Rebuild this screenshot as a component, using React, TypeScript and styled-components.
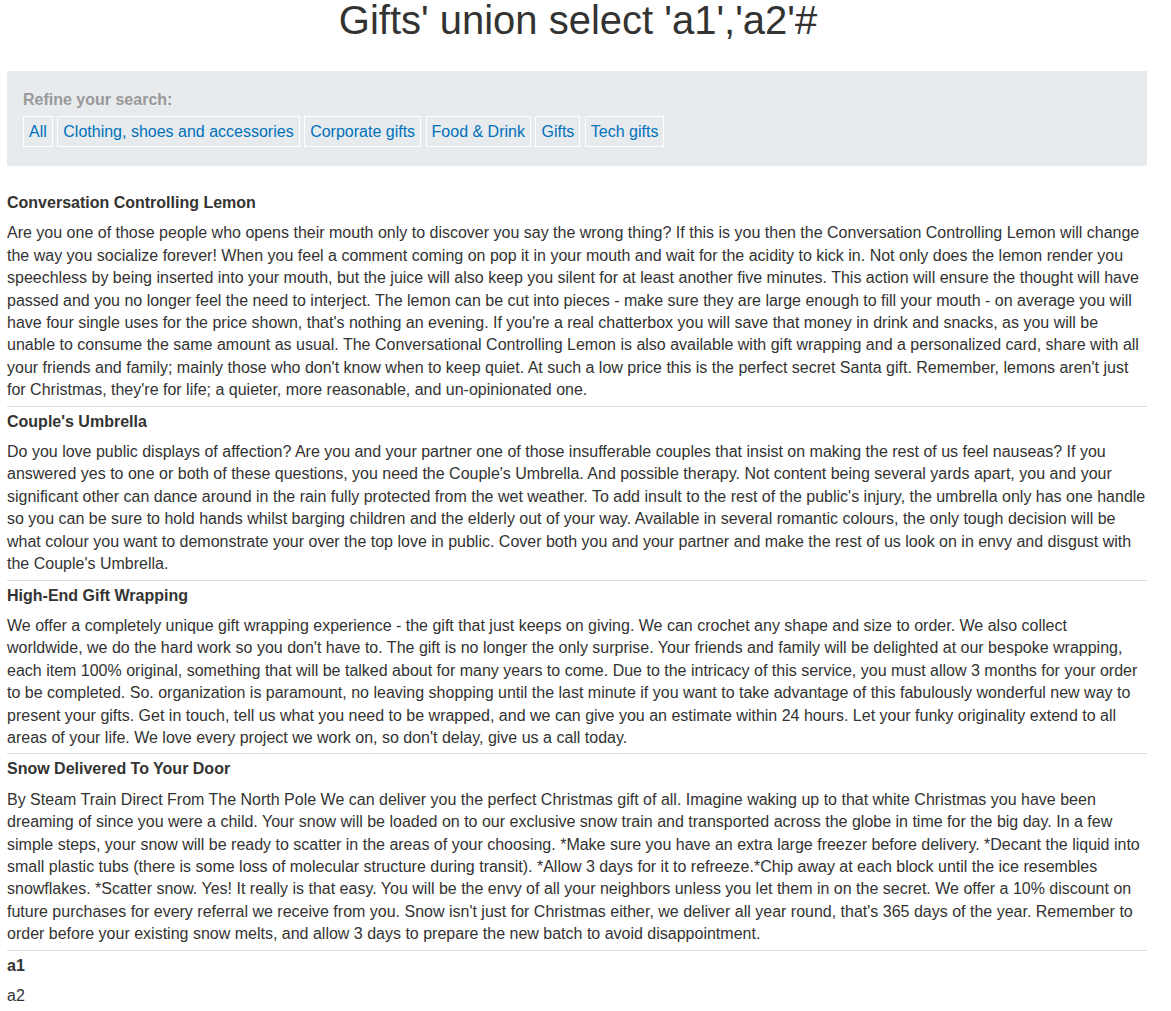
import styled, { createGlobalStyle } from 'styled-components';

const GlobalStyle = createGlobalStyle`
  body {
    margin: 0;
    background: #ffffff;
    color: #333332;
    font-family: "Liberation Sans", Arial, sans-serif;
    font-size: 16px;
  }
`;

const categories = [
  'All',
  'Clothing, shoes and accessories',
  'Corporate gifts',
  'Food & Drink',
  'Gifts',
  'Tech gifts',
];

const products = [
  {
    name: 'Conversation Controlling Lemon',
    text: "Are you one of those people who opens their mouth only to discover you say the wrong thing? If this is you then the Conversation Controlling Lemon will change the way you socialize forever! When you feel a comment coming on pop it in your mouth and wait for the acidity to kick in. Not only does the lemon render you speechless by being inserted into your mouth, but the juice will also keep you silent for at least another five minutes. This action will ensure the thought will have passed and you no longer feel the need to interject. The lemon can be cut into pieces - make sure they are large enough to fill your mouth - on average you will have four single uses for the price shown, that's nothing an evening. If you're a real chatterbox you will save that money in drink and snacks, as you will be unable to consume the same amount as usual. The Conversational Controlling Lemon is also available with gift wrapping and a personalized card, share with all your friends and family; mainly those who don't know when to keep quiet. At such a low price this is the perfect secret Santa gift. Remember, lemons aren't just for Christmas, they're for life; a quieter, more reasonable, and un-opinionated one.",
  },
  {
    name: "Couple's Umbrella",
    text: "Do you love public displays of affection? Are you and your partner one of those insufferable couples that insist on making the rest of us feel nauseas? If you answered yes to one or both of these questions, you need the Couple's Umbrella. And possible therapy. Not content being several yards apart, you and your significant other can dance around in the rain fully protected from the wet weather. To add insult to the rest of the public's injury, the umbrella only has one handle so you can be sure to hold hands whilst barging children and the elderly out of your way. Available in several romantic colours, the only tough decision will be what colour you want to demonstrate your over the top love in public. Cover both you and your partner and make the rest of us look on in envy and disgust with the Couple's Umbrella.",
  },
  {
    name: 'High-End Gift Wrapping',
    // the reference breaks before "worldwide"; our font runs a hair narrower
    text: "We offer a completely unique gift wrapping experience - the gift that just keeps on giving. We can crochet any shape and size to order. We also collect\nworldwide, we do the hard work so you don't have to. The gift is no longer the only surprise. Your friends and family will be delighted at our bespoke wrapping, each item 100% original, something that will be talked about for many years to come. Due to the intricacy of this service, you must allow 3 months for your order to be completed. So. organization is paramount, no leaving shopping until the last minute if you want to take advantage of this fabulously wonderful new way to present your gifts. Get in touch, tell us what you need to be wrapped, and we can give you an estimate within 24 hours. Let your funky originality extend to all areas of your life. We love every project we work on, so don't delay, give us a call today.",
  },
  {
    name: 'Snow Delivered To Your Door',
    text: "By Steam Train Direct From The North Pole We can deliver you the perfect Christmas gift of all. Imagine waking up to that white Christmas you have been dreaming of since you were a child. Your snow will be loaded on to our exclusive snow train and transported across the globe in time for the big day. In a few simple steps, your snow will be ready to scatter in the areas of your choosing. *Make sure you have an extra large freezer before delivery. *Decant the liquid into small plastic tubs (there is some loss of molecular structure during transit). *Allow 3 days for it to refreeze.*Chip away at each block until the ice resembles snowflakes. *Scatter snow. Yes! It really is that easy. You will be the envy of all your neighbors unless you let them in on the secret. We offer a 10% discount on future purchases for every referral we receive from you. Snow isn't just for Christmas either, we deliver all year round, that's 365 days of the year. Remember to order before your existing snow melts, and allow 3 days to prepare the new batch to avoid disappointment.",
  },
  { name: 'a1', text: 'a2' },
];

function App() {
  return (
    <>
      <GlobalStyle />
      <Page>
        <Title>Gifts' union select 'a1','a2'#</Title>
        <FilterPanel>
          <FilterLabel>Refine your search:</FilterLabel>
          <FilterList>
            {categories.map((c) => (
              <FilterLink key={c} href="#">{c}</FilterLink>
            ))}
          </FilterList>
        </FilterPanel>
        <ProductTable>
          {products.map((p, i) => (
            <ProductRow key={p.name} first={i === 0}>
              <ProductName>{p.name}</ProductName>
              <ProductText>{p.text}</ProductText>
            </ProductRow>
          ))}
        </ProductTable>
      </Page>
    </>
  );
}

const Page = styled.div`
  width: 1156px;
  display: flex;
  flex-direction: column;
  align-items: flex-start;
`;

const Title = styled.h1`
  width: 1156px;
  margin: 0;
  font-size: 40px;
  line-height: 40px;
  font-weight: normal;
  text-align: center;
  color: #333332;
`;

const FilterPanel = styled.div`
  width: 1140px;
  box-sizing: border-box;
  margin: 31px 0 0 7px;
  padding: 18px 16px 19px;
  background: #e7ebed;
  display: flex;
  flex-direction: column;
  gap: 5px;
`;

const FilterLabel = styled.div`
  font-weight: bold;
  color: #999999;
  line-height: 22px;
`;

const FilterList = styled.div`
  display: flex;
  flex-wrap: wrap;
  gap: 4.5px;
`;

const FilterLink = styled.a`
  display: block;
  border: 1px solid #ffffff;
  padding: 4px 5px;
  line-height: 21px;
  color: #0071bc;
  text-decoration: none;
`;

const ProductTable = styled.div`
  width: 1140px;
  margin: 22px 0 0 7px;
  display: flex;
  flex-direction: column;
`;

const ProductRow = styled.div<{ first: boolean }>`
  border-top: ${(p) => (p.first ? 'none' : '1px solid #dddddd')};
  line-height: 22.4px;
`;

const ProductName = styled.div`
  font-weight: bold;
  padding: 4px 0;
`;

const ProductText = styled.div`
  padding: 4px 0;
  white-space: pre-line;
`;

export default App;
